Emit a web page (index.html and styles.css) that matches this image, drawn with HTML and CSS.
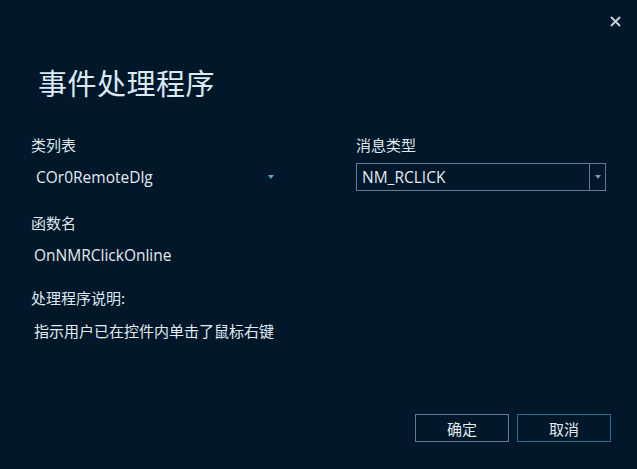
FILE: index.html
```html
<!DOCTYPE html>
<html lang="zh-CN">
<head>
<meta charset="utf-8">
<link rel="stylesheet" href="styles.css">
</head>
<body>
<div class="dialog">
  <div class="topbar">
    <span class="close">
      <svg width="11" height="11" viewBox="0 0 11 11"><path d="M1 1 L10 10 M10 1 L1 10" stroke="#c9d2da" stroke-width="1.9" fill="none"/></svg>
    </span>
  </div>
  <h1 class="title">事件处理程序</h1>
  <div class="grid">
    <div class="col left">
      <div class="label">类列表</div>
      <div class="plain-select">
        <span class="value">COr0RemoteDlg</span>
        <span class="arrow teal"></span>
      </div>
    </div>
    <div class="col right">
      <div class="label">消息类型</div>
      <div class="box-select">
        <span class="value">NM_RCLICK</span>
        <span class="btn"><span class="arrow grey"></span></span>
      </div>
    </div>
  </div>
  <div class="field">
    <div class="label">函数名</div>
    <div class="value text">OnNMRClickOnline</div>
  </div>
  <div class="field">
    <div class="label">处理程序说明:</div>
    <div class="value text cjk">指示用户已在控件内单击了鼠标右键</div>
  </div>
  <div class="footer">
    <button class="button ok">确定</button>
    <button class="button cancel">取消</button>
  </div>
</div>
</body>
</html>
```
FILE: styles.css
```css
html, body {
  margin: 0;
  padding: 0;
  background: #02172a;
  width: 637px;
  height: 469px;
  overflow: hidden;
}
body {
  font-family: "Noto Sans CJK SC", "Open Sans", sans-serif;
  color: #dfe7ed;
}
.dialog {
  display: flex;
  flex-direction: column;
  height: 469px;
  box-sizing: border-box;
  padding: 0 26px 0 31px;
}
.topbar {
  display: flex;
  justify-content: flex-end;
  padding-top: 16px;
  margin-right: -10px;
  height: 11px;
}
.close {
  display: flex;
  width: 11px;
  height: 11px;
}
.title {
  margin: 35px 0 0 7px;
  font-size: 29px;
  font-weight: 400;
  line-height: 40px;
  color: #dbe9f1;
  letter-spacing: 0.5px;
}
.grid {
  display: grid;
  grid-template-columns: 325px 250px;
  margin-top: 33px;
}
.label {
  font-size: 15px;
  line-height: 20px;
  color: #dfe7ed;
}
.plain-select {
  display: flex;
  align-items: center;
  justify-content: space-between;
  width: 238px;
  height: 28px;
  margin-top: 8px;
  padding-left: 5px;
}
.value {
  font-family: "Open Sans", "Noto Sans CJK SC", sans-serif;
  font-size: 15.5px;
  color: #e3ebf0;
}
.arrow {
  width: 0;
  height: 0;
  border-left: 3.5px solid transparent;
  border-right: 3.5px solid transparent;
  border-top: 4px solid #5ea6c6;
}
.arrow.grey {
  border-top-color: #8497a8;
}
.box-select {
  display: flex;
  align-items: stretch;
  height: 28px;
  margin-top: 8px;
  border: 1px solid #5d7b91;
  box-sizing: border-box;
  width: 250px;
}
.box-select .value {
  flex: 1;
  display: flex;
  align-items: center;
  padding-left: 5px;
}
.box-select .btn {
  width: 15px;
  border-left: 1px solid #5d7b91;
  display: flex;
  align-items: center;
  justify-content: center;
}
.field {
  margin-top: 22px;
}
.field + .field {
  margin-top: 23px;
}
.text {
  margin-top: 12px;
  padding-left: 3px;
  line-height: 20px;
}
.text.cjk {
  font-family: "Noto Sans CJK SC", sans-serif;
  font-size: 15px;
  margin-top: 13px;
}
.footer {
  margin-top: auto;
  margin-bottom: 27px;
  display: flex;
  justify-content: flex-end;
  gap: 8px;
}
.button {
  width: 94px;
  height: 28px;
  background: transparent;
  color: #e3ebf0;
  font-family: "Noto Sans CJK SC", sans-serif;
  font-size: 15px;
  padding: 0;
  box-sizing: border-box;
}
.button.ok {
  border: 1px solid #5a7d95;
}
.button.cancel {
  border: 1px solid #236f92;
}
```
